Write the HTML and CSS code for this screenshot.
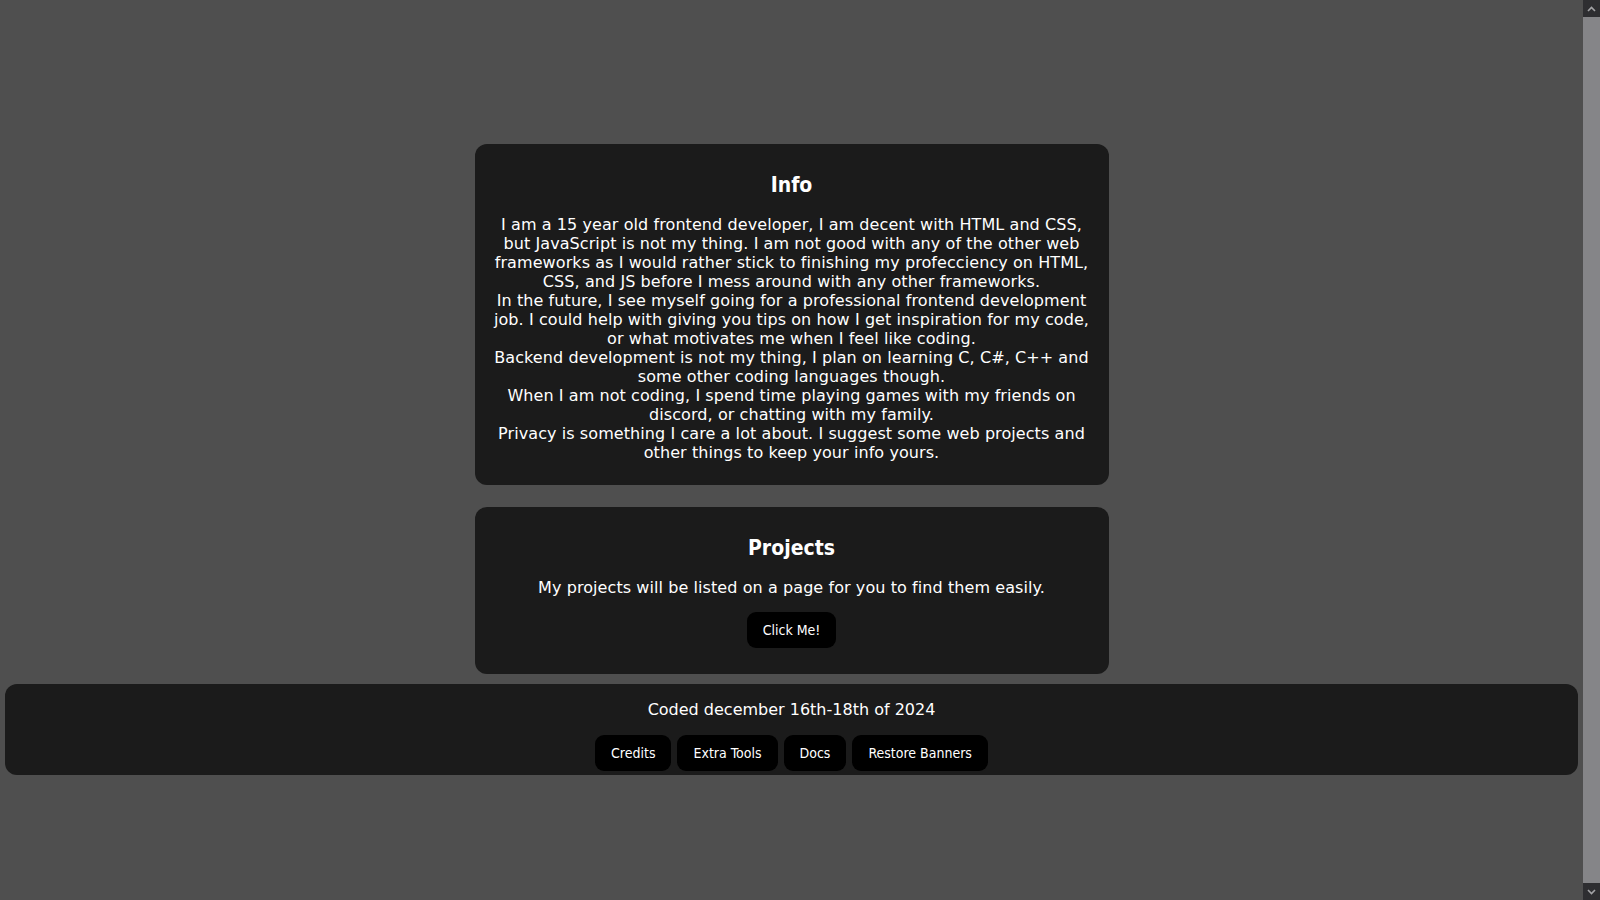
FILE: index.html
```html
<!DOCTYPE html>
<html lang="en">
<head>
<meta charset="utf-8">
<title>Info</title>
<link rel="stylesheet" href="styles.css">
</head>
<body>
<div class="page">
  <main class="content">
    <section class="card">
      <h2 class="card-title">Info</h2>
      <p class="card-text">I am a 15 year old frontend developer, I am decent with HTML and CSS, but JavaScript is not my thing. I am not good with any of the other web frameworks as I would rather stick to finishing my profecciency on HTML, CSS, and JS before I mess around with any other frameworks.<br>In the future, I see myself going for a professional frontend development job. I could help with giving you tips on how I get inspiration for my code, or what motivates me when I feel like coding.<br>Backend development is not my thing, I plan on learning C, C#, C++ and some other coding languages though.<br>When I am not coding, I spend time playing games with my friends on discord, or chatting with my family.<br>Privacy is something I care a lot about. I suggest some web projects and other things to keep your info yours.</p>
    </section>
    <section class="card card-projects">
      <h2 class="card-title">Projects</h2>
      <p class="card-text">My projects will be listed on a page for you to find them easily.</p>
      <div class="actions">
        <button class="btn">Click Me!</button>
      </div>
    </section>
  </main>
  <footer class="footer">
    <p class="footer-text">Coded december 16th-18th of 2024</p>
    <div class="footer-actions">
      <button class="btn">Credits</button>
      <button class="btn">Extra Tools</button>
      <button class="btn">Docs</button>
      <button class="btn">Restore Banners</button>
    </div>
  </footer>
</div>
<div class="scrollbar" aria-hidden="true">
  <div class="sb-btn">
    <svg width="9" height="6" viewBox="0 0 9 6"><path d="M1 5 L4.5 1.5 L8 5" fill="none" stroke="#a3a3a6" stroke-width="1.6"/></svg>
  </div>
  <div class="sb-thumb"></div>
  <div class="sb-btn">
    <svg width="9" height="6" viewBox="0 0 9 6"><path d="M1 1 L4.5 4.5 L8 1" fill="none" stroke="#a3a3a6" stroke-width="1.6"/></svg>
  </div>
</div>
</body>
</html>
```
FILE: styles.css
```css
html, body {
  margin: 0;
  height: 100%;
  overflow: hidden;
}
body {
  display: flex;
  background: #4f4f4f;
  color: #ffffff;
  font-family: "DejaVu Sans", sans-serif;
}
.page {
  flex: 1;
  min-width: 0;
}
.scrollbar {
  width: 17px;
  flex: none;
  display: flex;
  flex-direction: column;
  background: #2e2e31;
}
.sb-btn {
  height: 17px;
  display: flex;
  align-items: center;
  justify-content: center;
  background: #2e2e31;
}
.sb-thumb {
  flex: 1;
  background: #858588;
}
.content {
  padding-top: 144px;
  display: flex;
  flex-direction: column;
  align-items: center;
  gap: 22px;
}
.card {
  box-sizing: border-box;
  width: 634px;
  padding: 28px 14px 23px;
  background: #1b1b1b;
  border-radius: 12px;
  text-align: center;
}
.card-projects {
  padding-bottom: 26px;
}
.card-title {
  margin: 0 0 16px;
  font-size: 21px;
  line-height: 27px;
  font-weight: bold;
  font-family: "DejaVu Sans Condensed", "DejaVu Sans", sans-serif;
  font-stretch: condensed;
}
.card-text {
  margin: 0;
  font-size: 16px;
  line-height: 19px;
  letter-spacing: 0.08px;
}
.actions {
  display: flex;
  justify-content: center;
  margin-top: 15px;
}
.btn {
  height: 36px;
  padding: 0 16px;
  background: #000000;
  color: #ffffff;
  border: none;
  border-radius: 9px;
  font-family: "DejaVu Sans Condensed", "DejaVu Sans", sans-serif;
  font-stretch: condensed;
  font-size: 14px;
}
.footer {
  margin: 10px 5px 0;
  padding: 15px 0 4px;
  background: #1b1b1b;
  border-radius: 12px;
  text-align: center;
}
.footer-text {
  margin: 0 0 14px;
  font-size: 16px;
  line-height: 22px;
}
.footer-actions {
  display: flex;
  justify-content: center;
  gap: 6px;
}
```
